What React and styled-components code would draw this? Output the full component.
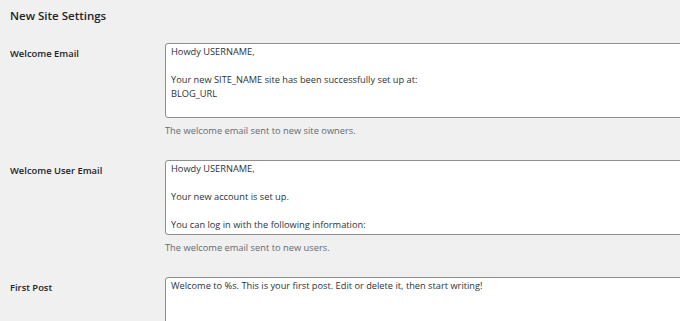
import React from 'react'
import styled, { createGlobalStyle } from 'styled-components'

const settings = [
  {
    id: 'welcome-email',
    label: 'Welcome Email',
    value:
      'Howdy USERNAME,\n\nYour new SITE_NAME site has been successfully set up at:\nBLOG_URL\n\nYou can log in to the administrator account with the following information:\n\nUsername: USERNAME\nPassword: PASSWORD',
    description: 'The welcome email sent to new site owners.',
  },
  {
    id: 'welcome-user-email',
    label: 'Welcome User Email',
    value:
      'Howdy USERNAME,\n\nYour new account is set up.\n\nYou can log in with the following information:\nUsername: USERNAME\nPassword: PASSWORD\nLOGINLINK',
    description: 'The welcome email sent to new users.',
  },
  {
    id: 'first-post',
    label: 'First Post',
    value: 'Welcome to %s. This is your first post. Edit or delete it, then start writing!',
  },
]

const App = () => (
  <>
    <GlobalStyle />
    <Page>
      <Heading>New Site Settings</Heading>
      <FormTable>
        {settings.map((item) => (
          <Row key={item.id}>
            <Label htmlFor={item.id}>{item.label}</Label>
            <Field>
              <TextArea id={item.id} rows={5} defaultValue={item.value} readOnly />
              {item.description && <Description>{item.description}</Description>}
            </Field>
          </Row>
        ))}
      </FormTable>
    </Page>
  </>
)

const GlobalStyle = createGlobalStyle`
  html, body {
    margin: 0;
    background: #f0f0f1;
    overflow: hidden;
  }

  body {
    font-family: 'Open Sans', 'Noto Sans', sans-serif;
    color: #1d2327;
  }
`

const Page = styled.div`
  padding: 8px 0 0 10px;
`

const Heading = styled.h2`
  margin: 0;
  font-size: 11.5px;
  line-height: 16px;
  font-weight: 600;
  color: #1d2327;
`

const FormTable = styled.div`
  display: flex;
  flex-direction: column;
  margin-top: 8px;
`

const Row = styled.div`
  display: grid;
  grid-template-columns: 155px 600px;
  align-items: start;
  padding: 11px 0;
`

const Label = styled.label`
  padding-top: 4px;
  font-size: 9.4px;
  line-height: 14px;
  font-weight: 600;
  color: #1d2327;
`

const Field = styled.div`
  display: flex;
  flex-direction: column;
`

const TextArea = styled.textarea`
  box-sizing: border-box;
  width: 600px;
  height: 75px;
  margin: 0;
  padding: 1px 5px;
  border: 1px solid #8c8f94;
  border-radius: 3px;
  background: #fff;
  font-family: 'Open Sans', 'Noto Sans', sans-serif;
  font-size: 9.25px;
  line-height: 14px;
  color: #2c3338;
  resize: none;
  overflow: hidden;
  outline: none;
`

const Description = styled.p`
  margin: 6px 0 0;
  font-size: 9.3px;
  line-height: 14px;
  color: #646970;
`

export default App
